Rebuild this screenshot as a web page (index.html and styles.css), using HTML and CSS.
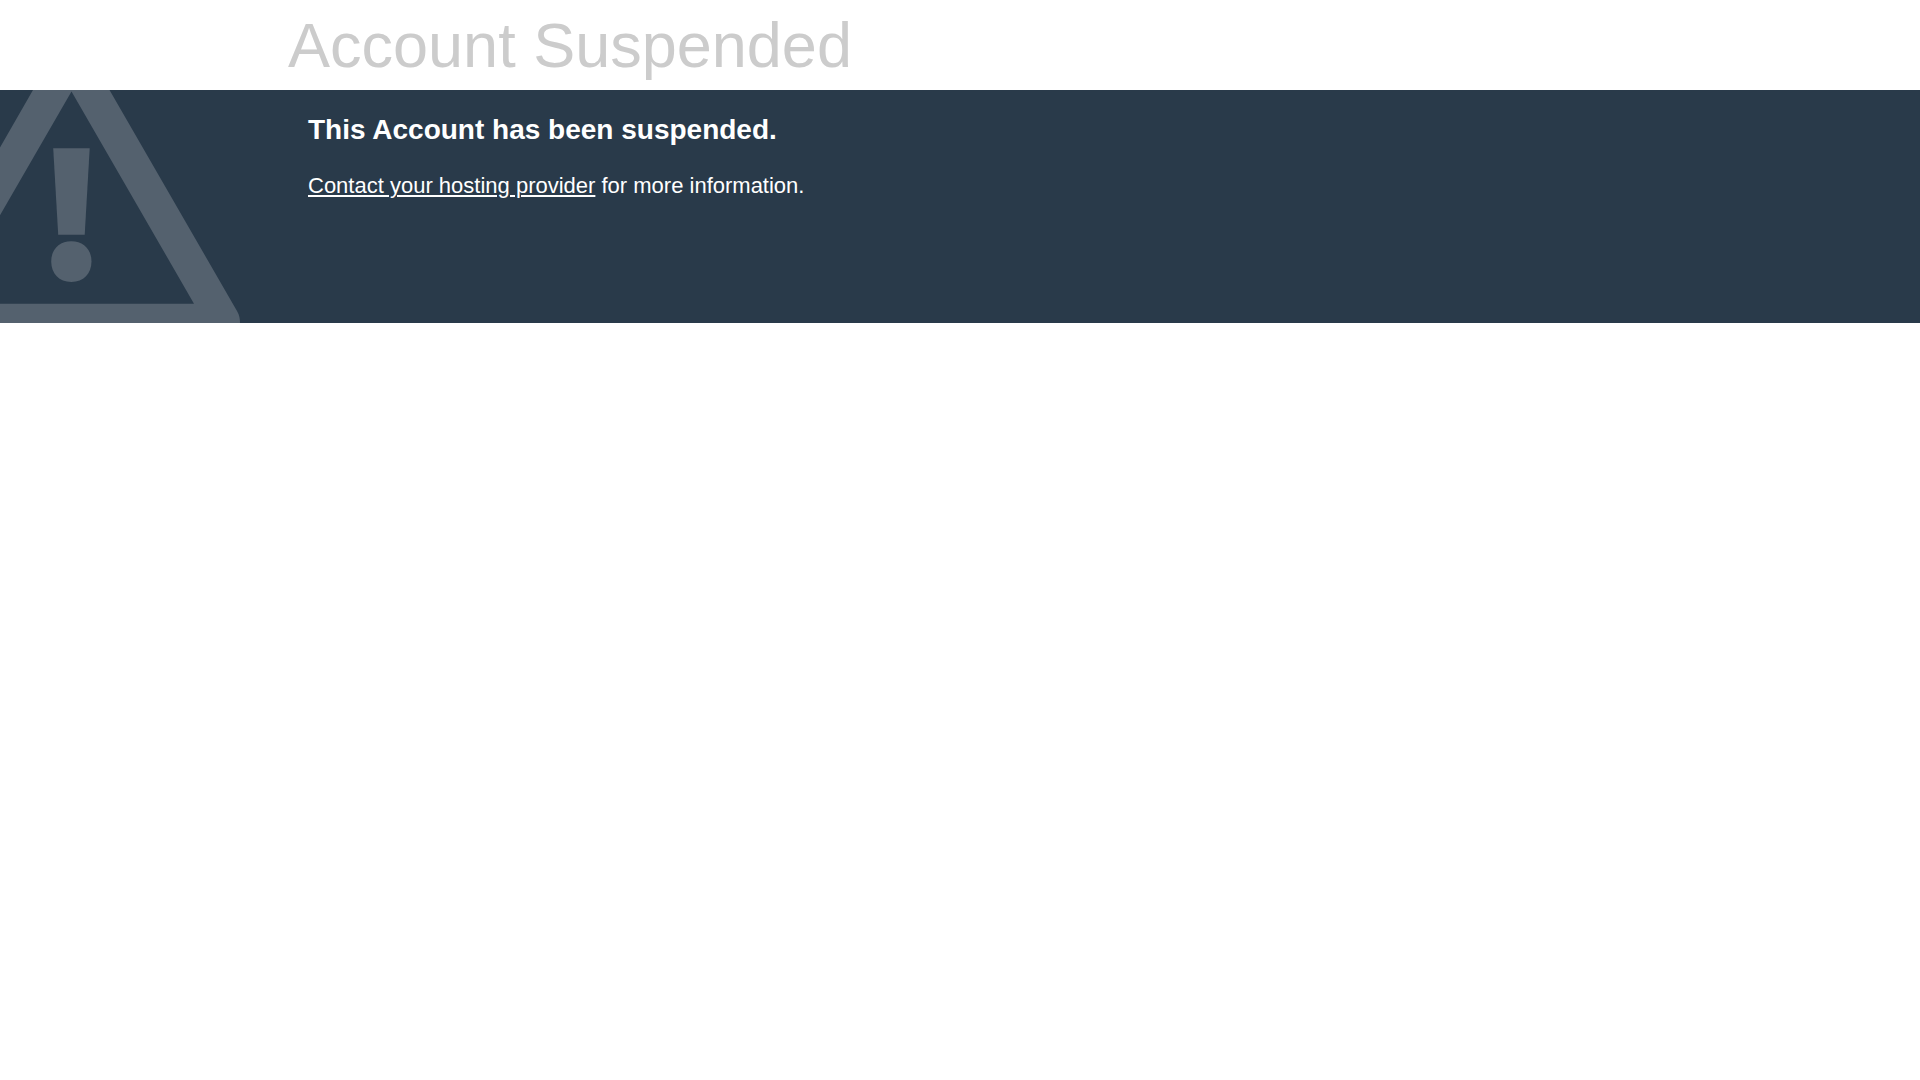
FILE: index.html
```html
<!DOCTYPE html>
<html lang="en">
<head>
<meta charset="utf-8">
<meta name="viewport" content="width=device-width, initial-scale=1">
<title>Account Suspended</title>
<link rel="stylesheet" href="styles.css">
</head>
<body>
<header class="page-header">
  <h1 class="page-title">Account Suspended</h1>
</header>
<main class="notice">
  <svg class="notice-icon" viewBox="0 0 240 233" aria-hidden="true">
    <path fill-rule="evenodd" d="M33 0H109.500L237 221Q240 226 240 233H-97Q-97 226 -94 221ZM71.500 1.500L-51 213.700H194Z"/>
    <path d="M53.200 58.200H89.700L84.700 144.800H58.200Z"/>
    <path d="M71.300 151.200C83.500 151.200 91.500 159.500 91.500 171.500S83.500 192 71.300 192S51.200 183.500 51.200 171.500S59 151.200 71.300 151.200Z"/>
  </svg>
  <div class="notice-text">
    <h2 class="notice-title">This Account has been suspended.</h2>
    <p class="notice-detail"><a class="notice-link" href="#">Contact your hosting provider</a> for more information.</p>
  </div>
</main>
</body>
</html>
```
FILE: styles.css
```css
body {
  margin: 0;
  background: #fff;
  color: #ccc;
  font-family: "Liberation Sans", Arial, sans-serif;
}

.page-header {
  padding: 8px 15%;
}

.page-title {
  margin: 0;
  font-size: 63px;
  font-weight: 400;
  line-height: 74px;
}

.notice {
  display: flex;
  align-items: flex-start;
  background: #293a4a;
  color: #fff;
}

.notice-icon {
  flex: none;
  width: 240px;
  fill: #54616e;
}

.notice-text {
  flex: 1;
  padding: 20px 68px;
}

.notice-title {
  margin: 0 0 20px;
  font-size: 28px;
  line-height: 40px;
}

.notice-detail {
  margin: 0;
  font-size: 22px;
  line-height: 32px;
}

.notice-link {
  color: inherit;
  text-decoration-thickness: 2px;
  text-underline-offset: 2px;
}
```
